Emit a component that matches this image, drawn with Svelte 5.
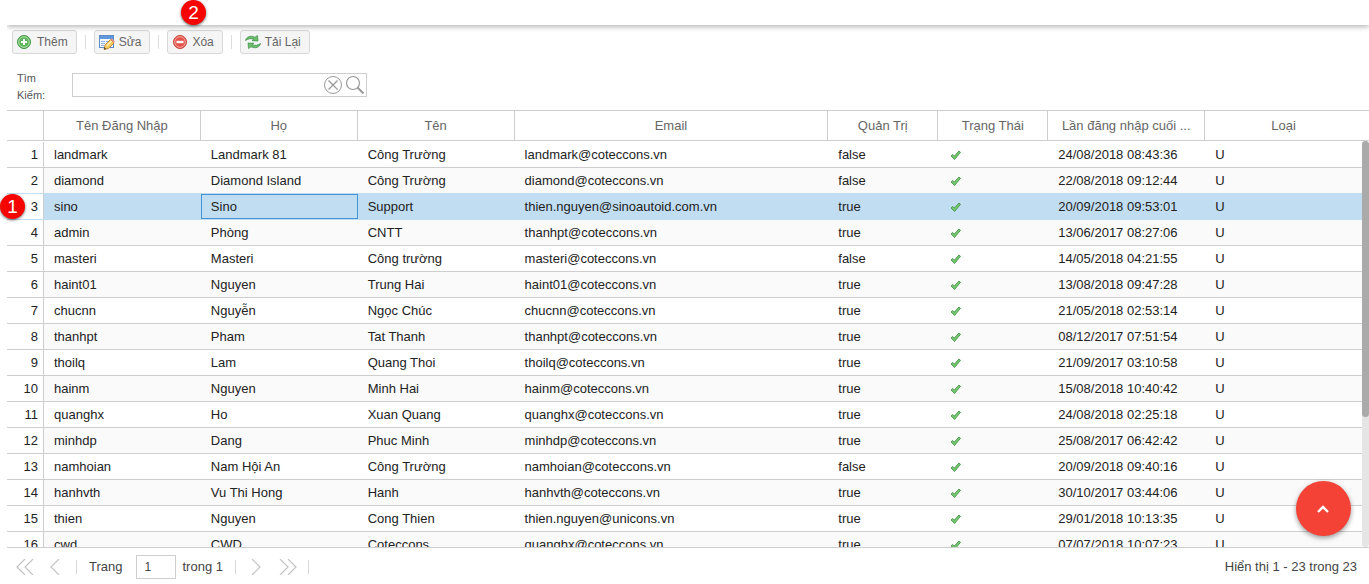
<script>
  const raw = `landmark|Landmark 81|Công Trường|landmark@coteccons.vn|false|24/08/2018 08:43:36
diamond|Diamond Island|Công Trường|diamond@coteccons.vn|false|22/08/2018 09:12:44
sino|Sino|Support|thien.nguyen@sinoautoid.com.vn|true|20/09/2018 09:53:01
admin|Phòng|CNTT|thanhpt@coteccons.vn|true|13/06/2017 08:27:06
masteri|Masteri|Công trường|masteri@coteccons.vn|false|14/05/2018 04:21:55
haint01|Nguyen|Trung Hai|haint01@coteccons.vn|true|13/08/2018 09:47:28
chucnn|Nguyễn|Ngọc Chúc|chucnn@coteccons.vn|true|21/05/2018 02:53:14
thanhpt|Pham|Tat Thanh|thanhpt@coteccons.vn|true|08/12/2017 07:51:54
thoilq|Lam|Quang Thoi|thoilq@coteccons.vn|true|21/09/2017 03:10:58
hainm|Nguyen|Minh Hai|hainm@coteccons.vn|true|15/08/2018 10:40:42
quanghx|Ho|Xuan Quang|quanghx@coteccons.vn|true|24/08/2018 02:25:18
minhdp|Dang|Phuc Minh|minhdp@coteccons.vn|true|25/08/2017 06:42:42
namhoian|Nam Hội An|Công Trường|namhoian@coteccons.vn|false|20/09/2018 09:40:16
hanhvth|Vu Thi Hong|Hanh|hanhvth@coteccons.vn|true|30/10/2017 03:44:06
thien|Nguyen|Cong Thien|thien.nguyen@unicons.vn|true|29/01/2018 10:13:35
cwd|CWD|Coteccons|quanghx@coteccons.vn|true|07/07/2018 10:07:23`;
  const rows = raw.split('\n').map((line) => line.split('|'));
  const headers = ['', 'Tên Đăng Nhập', 'Họ', 'Tên', 'Email', 'Quản Trị', 'Trạng Thái', 'Lần đăng nhập cuối ...', 'Loại'];
  let selected = $state(2);
  let search = $state('');
  let page = $state('1');
</script>

{#snippet plus()}
  <svg width="16" height="16" viewBox="0 0 16 16" aria-hidden="true">
    <circle cx="7" cy="8" r="6.5" fill="#5fb55a" stroke="#3f9440" />
    <circle cx="7" cy="8" r="5.3" fill="none" stroke="#b5e0ae" />
    <path d="M7 5v6M4 8h6" stroke="#fff" stroke-width="2" />
  </svg>
{/snippet}
{#snippet edit()}
  <svg width="16" height="16" viewBox="0 0 16 16" aria-hidden="true">
    <rect x=".5" y="1.5" width="14" height="12" fill="#f6faff" stroke="#5b8cc9" />
    <path d="M1 2h13v3H1z" fill="#5f98dc" />
    <path d="M2 7.500h4M7 7.500h3M2 9.500h4M2 11.500h3" stroke="#8db2df" />
    <path d="M5 15.500l1-4.500 5.500-5.500 3.500 3.500-5.500 5.500z" fill="#f9cb5d" stroke="#b9792a" stroke-width=".8" />
    <path d="M7.500 12l5-5" stroke="#fff0b5" stroke-width="1.300" />
    <path d="M11.500 5.500L12.800 4.500l3 3L15 9z" fill="#e8907c" />
    <path d="M5 15.500l.5-2.300 1.800 1.800z" fill="#4c3a20" />
  </svg>
{/snippet}
{#snippet minus()}
  <svg width="16" height="16" viewBox="0 0 16 16" aria-hidden="true">
    <circle cx="8" cy="8" r="6.5" fill="#e4534a" stroke="#c9403c" />
    <circle cx="8" cy="8" r="5.3" fill="none" stroke="#f5aaa2" />
    <path d="M4.500 8h7" stroke="#fff" stroke-width="2.4" />
  </svg>
{/snippet}
{#snippet reload()}
  <svg width="16" height="16" viewBox="0 0 16 16" aria-hidden="true">
    <g fill="#6fbd6e" stroke="#3a8c42" stroke-width=".7" stroke-linejoin="round">
      <path d="M.5 6.500C1 3 5.500 1 10 3.200L12.500 1.500l.5 5.500-6-.3L8.800 5.200C6 4.200 3.500 4.600.5 6.500z" />
      <path d="M15.500 9.500C15 13 10.500 15 6 12.800L3.500 14.500 3 9l6 .3-1.800 1.500C10 11.800 12.500 11.400 15.500 9.500z" />
    </g>
  </svg>
{/snippet}
{#snippet chevrons(d)}
  <svg width="18" height="16" viewBox="0 0 18 16" aria-hidden="true"><path {d} fill="none" stroke="#c4c4c4" stroke-width="1.2" /></svg>
{/snippet}

<main>
  <div class="banner"><span class="mark two">2</span></div>
  <div class="toolbar">
    <button>{@render plus()}Thêm</button><i></i>
    <button>{@render edit()}Sửa</button><i></i>
    <button>{@render minus()}Xóa</button><i></i>
    <button>{@render reload()}Tải Lại</button>
  </div>
  <div class="search">
    <label for="q">Tìm Kiếm:</label>
    <div class="field">
      <input id="q" bind:value={search} />
      <button aria-label="Xóa tìm kiếm" onclick={() => (search = '')}>
        <svg width="20" height="20" viewBox="0 0 20 20"><circle cx="10" cy="10" r="8.500" fill="none" stroke="#999" /><path d="M5.500 5.500l9 9M14.500 5.500l-9 9" stroke="#999" stroke-width="1.200" /></svg>
      </button>
      <button aria-label="Tìm">
        <svg width="20" height="20" viewBox="0 0 20 20"><circle cx="8" cy="8" r="6.500" fill="none" stroke="#999" stroke-width="1.200" /><path d="M12.500 12.500l6 6" stroke="#999" stroke-width="2" /></svg>
      </button>
    </div>
  </div>

  <div class="grid">
    <table>
      <thead>
        <tr>{#each headers as h}<th><span>{h}</span></th>{/each}</tr>
      </thead>
      <tbody>
        {#each rows as r, i}
          <tr class:selected={selected === i} class:before={selected === i + 1} onclick={() => (selected = i)}>
            <td class="num">{i + 1}</td>
            <td>{r[0]}</td>
            <td class:focus={selected === i}>{r[1]}</td>
            <td>{r[2]}</td>
            <td>{r[3]}</td>
            <td>{r[4]}</td>
            <td>
              <svg class="tick" width="12" height="12" viewBox="0 0 12 12" role="img" aria-label="Hoạt động"><path d="M1 7L2.500 5.500 4.300 7 9 2l1.500 1.300L4.600 10.500z" fill="#74c870" stroke="#3c8a3e" stroke-width=".8" /></svg>
            </td>
            <td>{r[5]}</td>
            <td>U</td>
          </tr>
        {/each}
      </tbody>
    </table>
    <div class="track"><div class="thumb"></div></div>
    <span class="mark one">1</span>
  </div>

  <footer>
    <button aria-label="Trang đầu">{@render chevrons('M9 0L1 8l8 8M17 0L9 8l8 8')}</button>
    <button class="prev" aria-label="Trang trước">{@render chevrons('M13 0L5 8l8 8')}</button>
    <i></i>
    <label for="page">Trang</label>
    <input id="page" bind:value={page} />
    <span>trong 1</span>
    <i></i>
    <button aria-label="Trang sau">{@render chevrons('M5 0l8 8-8 8')}</button>
    <button class="last" aria-label="Trang cuối">{@render chevrons('M1 0l8 8-8 8M9 0l8 8-8 8')}</button>
    <i></i>
    <span class="total">Hiển thị 1 - 23 trong 23</span>
  </footer>

  <button class="up" aria-label="Lên đầu trang">
    <svg width="15" height="12" viewBox="0 0 15 12"><path d="M2 9l5-5 5 5" fill="none" stroke="#fff" stroke-width="2.400" /></svg>
  </button>
</main>

<style>
  :global(body) { margin: 0; background: #fff; }
  main {
    height: 100vh;
    box-sizing: border-box;
    padding-left: 7px;
    display: flex;
    flex-direction: column;
    position: relative;
    overflow: hidden;
    font: 13px/16px "Liberation Sans", Arial, sans-serif;
    color: #222;
  }
  button, input { font: inherit; color: inherit; }
  button { border: 0; background: none; padding: 0; cursor: pointer; }
  svg { display: block; flex: none; }
  .banner { height: 25px; flex: none; position: relative; box-shadow: 0 2px 5px rgba(0, 0, 0, 0.28); clip-path: inset(0 0 -8px 0); }
  .mark {
    position: absolute;
    z-index: 2;
    width: 25px;
    height: 25px;
    border-radius: 50%;
    background: #f50400;
    color: #fff;
    font-size: 19px;
    line-height: 25px;
    text-align: center;
    box-shadow: 0 1px 3px rgba(0, 0, 0, 0.6);
  }
  .two { left: 174px; top: 0; }
  .one { left: -7px; top: 83px; }
  .toolbar { display: flex; align-items: center; padding: 5px 5px 0; flex: none; }
  .toolbar button {
    display: flex;
    align-items: center;
    gap: 4px;
    height: 24px;
    padding: 0 8px 0 4px;
    border: 1px solid #d8d8d8;
    border-radius: 3px;
    background: #f5f5f5;
    color: #666;
    font-size: 12px;
  }
  i { width: 1px; height: 14px; background: #ddd; flex: none; }
  .toolbar i { margin: 0 8px; }
  .search { display: flex; padding: 16px 10px 10px; height: 30px; flex: none; }
  .search label { width: 55px; font-size: 11px; line-height: 17px; color: #555; }
  .search label { padding-right: 20px; box-sizing: border-box; }
  .field { display: flex; align-items: center; box-sizing: border-box; width: 295px; height: 24px; margin-top: 3px; border: 1px solid #cecece; gap: 2px; padding-right: 1px; }
  .field input { flex: 1; min-width: 0; border: 0; padding: 0 8px; outline: 0; }
  .grid { flex: 1; min-height: 0; position: relative; display: flex; border-top: 1px solid #cecece; border-bottom: 1px solid #cecece; }
  table { flex: 1; min-width: 0; display: flex; flex-direction: column; }
  thead { display: block; flex: none; padding-right: 7px; border-bottom: 1px solid #cecece; }
  tbody { display: block; flex: 1; min-height: 0; overflow-y: auto; scrollbar-width: none; padding-top: 1px; margin-right: 7px; }
  tr { display: grid; grid-template-columns: 37px 1fr 1fr 1fr 2fr 110px 110px 1fr 1fr; }
  th {
    height: 29px;
    min-width: 0;
    box-sizing: border-box;
    padding: 0 10px;
    border-right: 1px solid #cecece;
    font-weight: 400;
    line-height: 29px;
    color: #666;
  }
  th:last-child { border-right: 0; }
  th span { display: block; overflow: hidden; text-overflow: ellipsis; white-space: nowrap; }
  td { min-width: 0; height: 26px; box-sizing: border-box; padding: 0 10px; line-height: 25px; border-bottom: 1px solid #cecece; white-space: nowrap; }
  tr:nth-child(even) td { background: #fafafa; }
  td.num, tr:nth-child(even) td.num { text-align: right; padding: 0 5px 0 0; border-right: 1px solid #cecece; background: #fff; }
  tr.selected td:not(.num) { background: #c1ddf1; }
  tr.selected td, tr.before td { border-bottom-color: #c1ddf1; }
  tr.selected td.focus { box-shadow: inset 0 0 0 1px #4394d6; }
  .tick { margin-top: 7px; margin-left: 2px; }
  .track { position: absolute; right: 0; top: 30px; bottom: 0; width: 7px; border-radius: 4px; background: #e5e5e5; }
  .thumb { height: 68%; border-radius: 4px; background: #aaa; }
  footer { height: 36px; box-sizing: border-box; flex: none; display: flex; align-items: center; padding: 2px 12px 0 9px; color: #444; }
  footer i { background: #d8d8d8; }
  .prev { margin: 0 12px; }
  footer label { margin: 0 14px 0 12px; }
  footer input { width: 40px; height: 24px; box-sizing: border-box; padding: 0 7px; border: 1px solid #cecece; margin-right: 6px; font-size: 12px; }
  footer span + i { margin: 0 11px 0 12px; }
  .last { margin: 0 11px 0 14px; }
  .total { margin-left: auto; }
  .up {
    position: absolute;
    right: 18px;
    bottom: 48px;
    width: 55px;
    height: 55px;
    border-radius: 50%;
    background: #f44336;
    display: grid;
    place-items: center;
    box-shadow: 0 2px 5px rgba(0, 0, 0, 0.4);
  }
</style>
